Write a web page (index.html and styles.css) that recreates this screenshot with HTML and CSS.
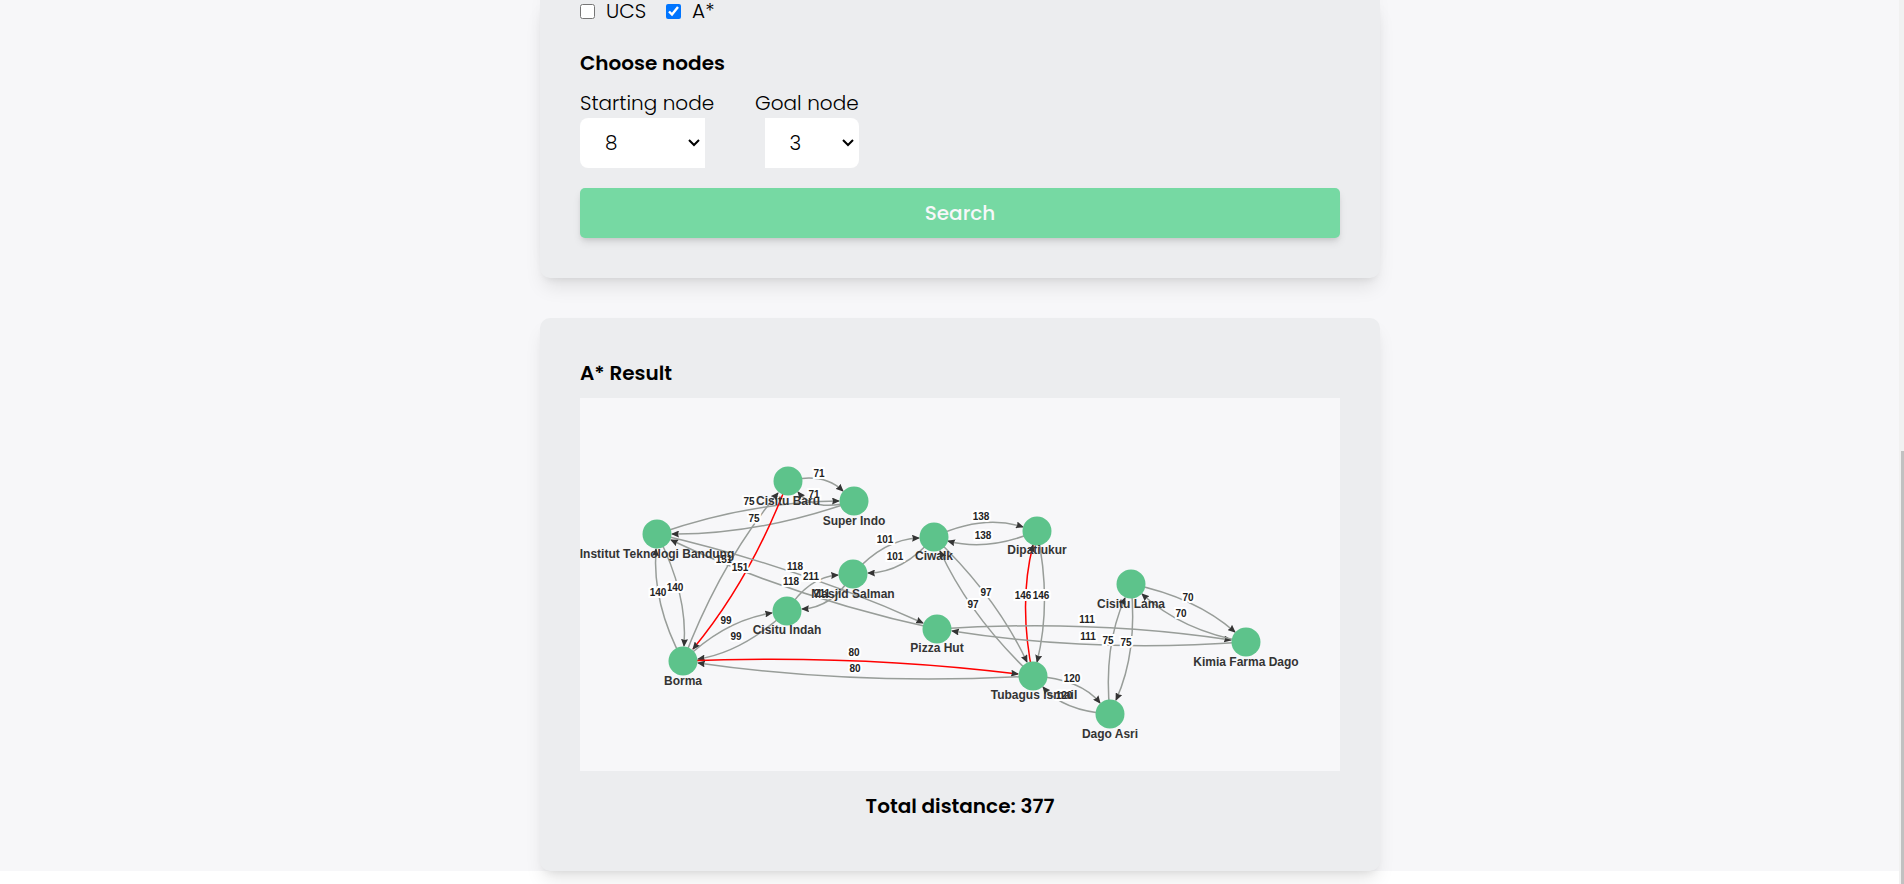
FILE: index.html
```html
<!DOCTYPE html>
<html lang="en">
<head>
<meta charset="utf-8">
<title>Path Finder</title>
<link rel="stylesheet" href="styles.css">
</head>
<body>
<main class="page">
  <form class="card card-form">
    <div class="algorithms">
      <label class="check"><input type="checkbox" name="algorithm" value="ucs">UCS</label>
      <label class="check"><input type="checkbox" name="algorithm" value="astar" checked>A*</label>
    </div>
    <h2 class="heading">Choose nodes</h2>
    <div class="fields">
      <div class="field">
        <label for="start">Starting node</label>
        <select id="start" class="select select-start"><option>8</option></select>
      </div>
      <div class="field field-goal">
        <label for="goal">Goal node</label>
        <select id="goal" class="select select-goal"><option>3</option></select>
      </div>
    </div>
    <button type="button" class="search">Search</button>
  </form>

  <section class="card">
    <h2 class="heading">A* Result</h2>
    <svg class="graph" viewBox="580 398 760 373" role="img" aria-label="Route graph">
      <defs>
        <marker id="arrow" viewBox="0 0 8 7" markerWidth="8" markerHeight="7" refX="7" refY="3.5" orient="auto" markerUnits="userSpaceOnUse">
          <path class="arrow" d="M0 0 8 3.5 0 7 1 3.5z"/>
        </marker>
      </defs>
      <g class="edges">
        <path d="M788 481Q823 472 843 491"/>
        <path d="M854 501Q815 513 798 492"/>
        <path d="M657 534Q749 502 839 501"/>
        <path d="M854 501Q758 535 672 534"/>
        <path d="M657 534Q688 594 684 646"/>
        <path d="M683 661Q652 604 656 549"/>
        <path d="M683 661Q720 563 778 493"/>
        <path class="route" d="M788 481Q751 579 693 649"/>
        <path d="M657 534Q799 567 923 623"/>
        <path d="M937 629Q793 598 671 540"/>
        <path d="M787 611Q808 577 838 575"/>
        <path d="M853 574Q832 608 802 609"/>
        <path d="M683 661Q725 620 772 613"/>
        <path d="M787 611Q743 652 698 659"/>
        <path d="M853 574Q884 539 919 538"/>
        <path d="M934 537Q903 573 868 573"/>
        <path d="M934 537Q983 514 1023 527"/>
        <path d="M1037 531Q988 552 948 541"/>
        <path d="M934 537Q996 596 1027 662"/>
        <path d="M1033 676Q971 618 940 551"/>
        <path class="route" d="M683 661Q856 654 1018 674"/>
        <path d="M1033 676Q858 686 698 663"/>
        <path class="route" d="M1033 676Q1018 604 1033 545"/>
        <path d="M1037 531Q1052 602 1037 662"/>
        <path d="M1033 676Q1081 679 1100 703"/>
        <path d="M1110 714Q1063 711 1043 687"/>
        <path d="M937 629Q1091 619 1231 640"/>
        <path d="M1246 642Q1091 653 952 631"/>
        <path d="M1131 584Q1195 597 1235 632"/>
        <path d="M1246 642Q1182 631 1142 594"/>
        <path d="M1110 714Q1103 647 1125 598"/>
        <path d="M1131 584Q1138 652 1116 700"/>
      </g>
      <g class="weights">
        <text x="819" y="477">71</text><text x="814" y="498">71</text>
        <text x="749" y="505">75</text><text x="754" y="522">75</text>
        <text x="675" y="591">140</text><text x="658" y="596">140</text>
        <text x="724" y="563">151</text><text x="740" y="571">151</text>
        <text x="795" y="570">118</text><text x="791" y="585">118</text>
        <text x="811" y="580">211</text><text x="822" y="597">211</text>
        <text x="726" y="624">99</text><text x="736" y="640">99</text>
        <text x="885" y="543">101</text><text x="895" y="560">101</text>
        <text x="981" y="520">138</text><text x="983" y="539">138</text>
        <text x="986" y="596">97</text><text x="973" y="608">97</text>
        <text x="854" y="656">80</text><text x="855" y="672">80</text>
        <text x="1023" y="599">146</text><text x="1041" y="599">146</text>
        <text x="1072" y="682">120</text><text x="1064" y="699">120</text>
        <text x="1087" y="623">111</text><text x="1088" y="640">111</text>
        <text x="1188" y="601">70</text><text x="1181" y="617">70</text>
        <text x="1108" y="644">75</text><text x="1126" y="646">75</text>
      </g>
      <g class="nodes">
        <circle cx="788" cy="481" r="14.5"/><circle cx="854" cy="501" r="14.5"/>
        <circle cx="657" cy="534" r="14.5"/><circle cx="683" cy="661" r="14.5"/>
        <circle cx="787" cy="611" r="14.5"/><circle cx="853" cy="574" r="14.5"/>
        <circle cx="934" cy="537" r="14.5"/><circle cx="1037" cy="531" r="14.5"/>
        <circle cx="937" cy="629" r="14.5"/><circle cx="1033" cy="676" r="14.5"/>
        <circle cx="1131" cy="584" r="14.5"/><circle cx="1246" cy="642" r="14.5"/>
        <circle cx="1110" cy="714" r="14.5"/>
      </g>
      <g class="names">
        <text x="788" y="505">Cisitu Baru</text>
        <text x="854" y="525">Super Indo</text>
        <text x="657" y="558">Institut Teknologi Bandung</text>
        <text x="683" y="685">Borma</text>
        <text x="787" y="634">Cisitu Indah</text>
        <text x="853" y="598">Masjid Salman</text>
        <text x="934" y="560">Ciwalk</text>
        <text x="1037" y="554">Dipatiukur</text>
        <text x="937" y="652">Pizza Hut</text>
        <text x="1034" y="699">Tubagus Ismail</text>
        <text x="1131" y="608">Cisitu Lama</text>
        <text x="1246" y="666">Kimia Farma Dago</text>
        <text x="1110" y="738">Dago Asri</text>
      </g>
    </svg>
    <p class="total">Total distance: 377</p>
  </section>
</main>
<div class="scrollbar"><div class="thumb"></div></div>
</body>
</html>
```
FILE: styles.css
```css
* { box-sizing: border-box; }

body {
  min-height: 100vh;
  margin: 0;
  background: #fff;
  color: #000;
  font: 300 20px/30px Poppins, Inter, sans-serif;
}

.page {
  display: flex;
  flex-direction: column;
  align-items: center;
  gap: 40px;
  margin-right: 5px;
  padding-left: 21px;
  background: #f7f7f9;
}

.card {
  width: 100%;
  max-width: 840px;
  padding: 40px;
  border-radius: 10px;
  background: #ecedef;
  box-shadow: 0 12px 19px -4px rgba(0, 0, 0, .1), 0 5px 8px -5px rgba(0, 0, 0, .1);
}

.card-form {
  padding-top: 0;
  border-radius: 0 0 10px 10px;
  box-shadow: 0 12px 19px -4px rgba(0, 0, 0, .1), 0 5px 8px -5px rgba(0, 0, 0, .1), 0 -12px 19px -4px rgba(0, 0, 0, .04);
}

.algorithms {
  display: flex;
  gap: 20px;
  height: 23px;
  margin-bottom: 25px;
  line-height: 23px;
}

.check {
  display: flex;
  align-items: center;
  gap: 11px;
}

.check input {
  width: 15px;
  height: 15px;
  margin: 0;
  accent-color: #0075ff;
}

.heading {
  margin: 0 0 10px;
  font-size: 20px;
  font-weight: 600;
}

.fields {
  display: flex;
  gap: 41px;
  margin-bottom: 20px;
}

.field {
  display: flex;
  flex-direction: column;
  align-items: flex-start;
}

.field-goal { align-items: flex-end; }

.select {
  height: 50px;
  padding: 0 25px;
  border: 0;
  appearance: none;
  background: #fff url("data:image/svg+xml,%3Csvg xmlns='http://www.w3.org/2000/svg' width='12' height='8'%3E%3Cpath d='M1 1l5 5 5-5' fill='none' stroke='%23000' stroke-width='2'/%3E%3C/svg%3E") no-repeat right 5px center;
  color: #000;
  font: inherit;
}

.select-start {
  width: 125px;
  border-radius: 8px 0 0 8px;
}

.select-goal {
  width: 94px;
  border-radius: 0 8px 8px 0;
}

.search {
  display: block;
  width: 100%;
  height: 50px;
  border: 0;
  border-radius: 5px;
  background: #76d9a3;
  box-shadow: 0 5px 8px -1px rgba(0, 0, 0, .1), 0 3px 5px -2px rgba(0, 0, 0, .1);
  color: #f7f7f9;
  font: inherit;
  font-weight: 500;
}

.graph {
  display: block;
  width: 100%;
  background: #f7f7f9;
  font-family: "Liberation Sans", Arial, sans-serif;
  font-weight: 700;
  text-anchor: middle;
}

.edges path {
  fill: none;
  stroke: #989d99;
  stroke-width: 1.5;
  marker-end: url(#arrow);
}

.edges .route { stroke: #f00; }

.arrow { fill: #343434; }

.weights {
  fill: #222;
  stroke: #fff;
  stroke-width: 4px;
  paint-order: stroke;
  font-size: 10px;
}

.nodes { fill: #5dc38b; }

.names {
  fill: #343434;
  font-size: 12px;
}

.total {
  margin: 20px 0 10px;
  font-weight: 600;
  text-align: center;
}

.scrollbar {
  position: fixed;
  inset: 0 0 0 auto;
  width: 5px;
  padding-left: 2px;
  background: #f1f1f1;
}

.thumb {
  height: 49vh;
  margin-top: 51vh;
  background: #c1c1c1;
}
```
